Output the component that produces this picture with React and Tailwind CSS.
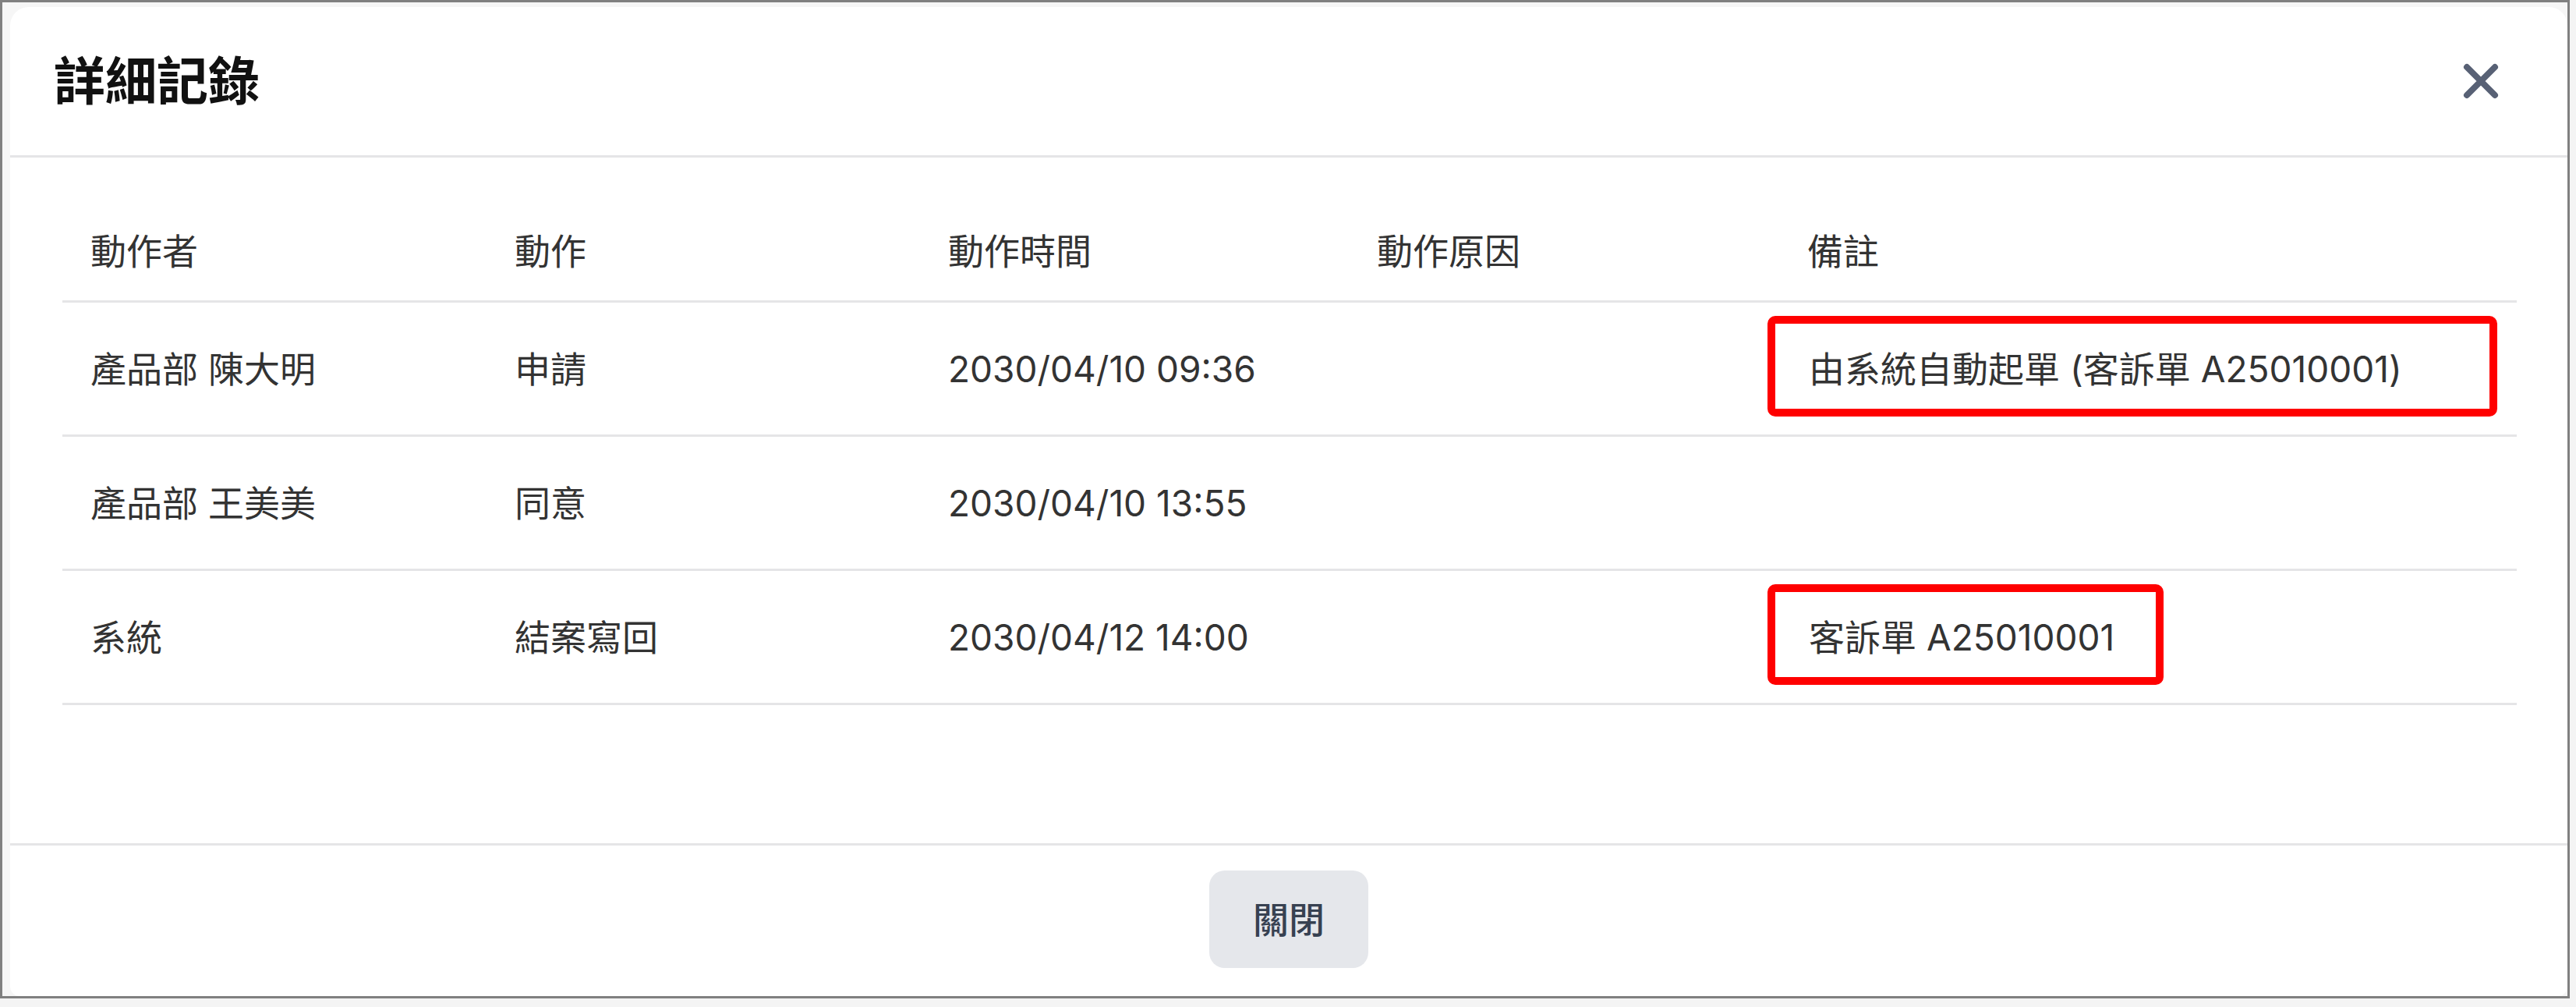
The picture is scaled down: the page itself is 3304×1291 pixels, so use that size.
import React from "react";

const FONT = "font-['Inter','Noto_Sans_CJK_TC',sans-serif]";

const rows = [
  { actor: "產品部 陳大明", action: "申請", time: "2030/04/10 09:36", reason: "", note: "由系統自動起單 (客訴單 A25010001)", box: "w-[936px]" },
  { actor: "產品部 王美美", action: "同意", time: "2030/04/10 13:55", reason: "", note: "", box: null },
  { actor: "系統", action: "結案寫回", time: "2030/04/12 14:00", reason: "", note: "客訴單 A25010001", box: "w-[508px]" },
];

const COLS = "grid grid-cols-[544px_556px_550px_552px_1fr]";

export default function App() {
  return (
    <div className={`w-[3304px] h-[1291px] bg-[#f4f4f4] ${FONT}`}>
      <div className="w-[3296px] h-[1280px] border-[3px] border-[#808080] bg-[#f6f6f6] pl-[10px] pt-[6px] flex flex-col">
        <div className="flex-1 bg-white rounded-tl-[24px] rounded-tr-[24px] rounded-bl-[12px] rounded-br-[12px] flex flex-col">
          {/* Header */}
          <div className="h-[193px] border-b-[3px] border-[#e5e5e7] flex items-center justify-between pl-[56px] pr-[85px]">
            <h2 className="text-[66px] leading-none font-bold text-[#111111]">詳細記錄</h2>
            <svg width="52" height="52" viewBox="0 0 52 52" className="text-[#586175]">
              <path d="M8 8 L44 44 M44 8 L8 44" stroke="currentColor" strokeWidth="8" strokeLinecap="round" fill="none" />
            </svg>
          </div>

          {/* Body */}
          <div className="pl-[67px] pr-[65px] pt-[57px] pb-[177px]">
            <div className={`${COLS} h-[129px] border-b-[3px] border-[#e5e5e7] items-center text-[46px] text-[#333333] leading-none`}>
              <div className="pl-[36px]">動作者</div>
              <div className="pl-[36px]">動作</div>
              <div className="pl-[36px]">動作時間</div>
              <div className="pl-[36px]">動作原因</div>
              <div className="pl-[36px]">備註</div>
            </div>
            {rows.map((r, i) => (
              <div key={i} className={`${COLS} h-[172px] border-b-[3px] border-[#e5e5e7] items-center text-[46px] text-[#333333] leading-none`}>
                <div className="pl-[36px]">{r.actor}</div>
                <div className="pl-[36px]">{r.action}</div>
                <div className="pl-[36px]">{r.time}</div>
                <div className="pl-[36px]">{r.reason}</div>
                <div className="relative h-full flex items-center pl-[38px]">
                  <span>{r.note}</span>
                  {r.box && (
                    <div className={`absolute left-[-15px] top-[17px] h-[129px] ${r.box} border-[10px] border-[#ff0000] rounded-[10px]`} />
                  )}
                </div>
              </div>
            ))}
          </div>

          {/* Footer */}
          <div className="flex-1 border-t-[3px] border-[#e5e5e7] flex justify-center pt-[32px]">
            <button className="w-[204px] h-[125px] rounded-[20px] bg-[#e5e7eb] text-[46px] font-medium text-[#374151] leading-none">
              關閉
            </button>
          </div>
        </div>
      </div>
    </div>
  );
}
